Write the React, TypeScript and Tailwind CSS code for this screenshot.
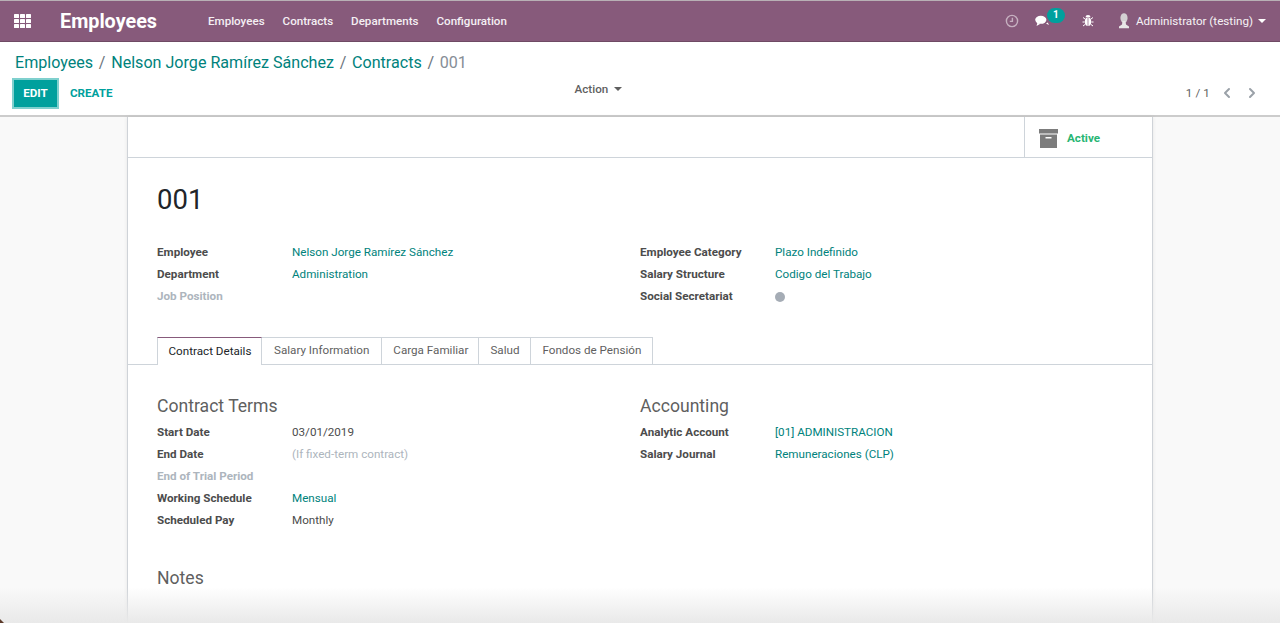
import React from "react";
import { ChevronLeft, ChevronRight } from "lucide-react";

const Grid = () => (
  <svg width="17" height="14" viewBox="0 0 17 14" fill="#fff">
    {[0, 5, 10].map((y) =>
      [0, 6, 12].map((x) => <rect key={`${x}-${y}`} x={x} y={y} width="5" height="4" rx="0.6" />)
    )}
  </svg>
);

const Caret = ({ c = "#fff" }: { c?: string }) => (
  <svg width="8" height="4" viewBox="0 0 8 4" fill={c}><path d="M0 0h8L4 4z" /></svg>
);

const Field = ({ label, value, link, muted, placeholder, dot }: { label: string; value?: string; link?: boolean; muted?: boolean; placeholder?: boolean; dot?: boolean }) => (
  <div className="flex h-[22px] items-center text-[11.65px]">
    <div className={`w-[135px] shrink-0 font-bold ${muted ? "text-[#adb5bd]" : "text-[#4c4c4c]"}`}>{label}</div>
    {dot ? (
      <span className="h-[10px] w-[10px] rounded-full bg-[#a5acb5]" />
    ) : (
      <div className={link ? "text-[#00827c]" : placeholder ? "text-[#adb5bd]" : "text-[#4c4c4c]"}>{value}</div>
    )}
  </div>
);

const tabs = [
  { t: "Salary Information", c: "pl-[12px] pr-[12px]" },
  { t: "Carga Familiar", c: "pl-[11px] pr-[10px]" },
  { t: "Salud", c: "pl-[11px] pr-[11px]" },
  { t: "Fondos de Pensión", c: "pl-[11px] pr-[11px]" },
];

export default function App() {
  return (
    <div className="relative flex h-[623px] flex-col overflow-hidden bg-white font-['Roboto',sans-serif] text-[#4c4c4c]">
      <header className="flex h-[42px] shrink-0 items-center border-t border-b border-t-[#b8b0b5] border-b-[#6f4a64] bg-[#875a7b] text-white">
        <div className="ml-[14px] flex w-[46px] items-center"><Grid /></div>
        <div className="w-[148px] pt-[2px] text-[19.8px] font-bold leading-none">Employees</div>
        <nav className="flex gap-[18px] pt-[2px] text-[11.6px] font-medium text-[#f4eff3]">
          <span>Employees</span><span>Contracts</span><span>Departments</span><span>Configuration</span>
        </nav>
        <div className="ml-auto flex items-center text-[11.65px]">
          <svg width="14" height="14" viewBox="0 0 14 14" fill="none" stroke="#c6b0c0" strokeWidth="1.4" className="mr-[16px]">
            <circle cx="7" cy="7" r="5.6" /><path d="M7.4 3.8v3.6H4.8" />
          </svg>
          <div className="relative mr-[33px] flex items-center">
            <svg width="14" height="12" viewBox="0 0 14 12" fill="#fff"><ellipse cx="5.8" cy="4.8" rx="5.6" ry="4" /><path d="M2.4 7.8L1.6 11l3.8-2.2z" /><path d="M11 8.5c1 .6 1.8 1.2 3 1.5-.6-.8-1-1.6-1-2.4z" /></svg>
            <span className="absolute left-[12px] top-[-7px] flex h-[15px] w-[18px] items-center justify-center rounded-full bg-[#00a09d] text-[10px] font-bold leading-none">1</span>
          </div>
          <svg width="12" height="13" viewBox="0 0 12 13" fill="#fff" stroke="#fff" className="mr-[24px]">
            <ellipse cx="6" cy="7.8" rx="3.2" ry="4.2" stroke="none" /><path d="M3.5 3.2a2.5 2.2 0 0 1 5 0z" stroke="none" />
            <path d="M3 5L1 3.5M9 5l2-1.5M2.6 8H.5M9.4 8h2.1M3 10.5l-2 1.5M9 10.5l2 1.5" strokeWidth="1" fill="none" />
            <path d="M6 4v8" stroke="#875a7b" strokeWidth="0.7" />
          </svg>
          <svg width="12" height="16" viewBox="0 0 12 16" className="mr-[6px]"><ellipse cx="6" cy="5" rx="3.6" ry="4.8" fill="#d4d0d3" /><path d="M4.5 8h3l.5 3.5 3 2v1.7H1v-1.7l3-2z" fill="#e8e6e7" /></svg>
          <span className="mr-[5px] pt-[2px] text-[#f6f2f5]">Administrator (testing)</span>
          <span className="mr-[14px] flex"><Caret /></span>
        </div>
      </header>

      <section className="h-[75px] shrink-0 border-b-2 border-[#ccc] px-[15px] pt-[6px]">
        <div className="flex h-[30px] items-center gap-[5.7px] text-[16.1px] leading-none">
          <span className="text-[#00827c]">Employees</span><span className="text-[#6c757d]">/</span>
          <span className="text-[#00827c]">Nelson Jorge Ramírez Sánchez</span><span className="text-[#6c757d]">/</span>
          <span className="text-[#00827c]">Contracts</span><span className="text-[#6c757d]">/</span>
          <span className="text-[#868e96]">001</span>
        </div>
        <div className="relative flex items-center">
          <button className="ml-[-3px] flex h-[31px] w-[47px] items-center justify-center border-2 border-[#7fd0ce] bg-[#00a09d] text-[11.65px] font-bold text-white">EDIT</button>
          <button className="ml-[11px] text-[11.65px] font-bold text-[#00a09d]">CREATE</button>
          <div className="ml-[462px] mb-[8px] flex items-center gap-[6px] text-[11.65px] font-medium text-[#5f5f5f]"><span>Action</span><Caret c="#5f5f5f" /></div>
          <div className="ml-auto flex items-center text-[11.65px] text-[#5f5f5f]">
            <span className="mr-[9px] tracking-[0.1px]">1 / 1</span>
            <ChevronLeft size={16} strokeWidth={3} className="mr-[9px] text-[#9aa1a8]" />
            <ChevronRight size={16} strokeWidth={3} className="mr-[5px] text-[#9aa1a8]" />
          </div>
        </div>
      </section>

      <main className="min-h-0 flex-1 bg-[#f9f9f9]">
        <div className="mx-auto h-[600px] w-[1026px] border border-t-0 border-[#cfd3d8] bg-white shadow-[0_0_4px_rgba(0,0,0,0.08)]">
          <div className="flex h-[41px] justify-end border-b border-[#ced4da]">
            <div className="flex w-[128px] items-center border-l border-[#ced4da] pl-[14px] pt-[2px]">
              <svg width="20" height="19" viewBox="0 0 20 19" fill="#7c7c7c" className="mr-[8px]">
                <rect x="0" y="0" width="19" height="4.5" />
                <path d="M1 5.5h17V19H1zM6.5 8v1.6h6V8z" fillRule="evenodd" />
              </svg>
              <span className="pt-[2px] text-[11.65px] font-bold text-[#28b673]">Active</span>
            </div>
          </div>

          <div className="px-[29px]">
            <h1 className="mt-[23px] text-[27.5px] leading-[38px] text-[#212529]">001</h1>
            <div className="mt-[23px] grid grid-cols-[483px_1fr]">
              <div>
                <Field label="Employee" value="Nelson Jorge Ramírez Sánchez" link />
                <Field label="Department" value="Administration" link />
                <Field label="Job Position" muted />
              </div>
              <div>
                <Field label="Employee Category" value="Plazo Indefinido" link />
                <Field label="Salary Structure" value="Codigo del Trabajo" link />
                <Field label="Social Secretariat" dot />
              </div>
            </div>
          </div>

          <div className="mt-[29px] flex h-[28px] items-end border-b border-[#ced4da] pl-[29px] text-[11.65px]">
            <div className="mb-[-1px] flex h-[28px] w-[105px] items-center justify-center border-x border-t border-x-[#ced4da] border-t-[#875a7b] bg-white pl-[1px] text-[#212529]">Contract Details</div>
            {tabs.map(({ t, c }) => (
              <div key={t} className={`mb-[-1px] flex h-[28px] items-center border-y border-r border-[#ced4da] ${c} text-[#5f5f5f]`}>{t}</div>
            ))}
          </div>

          <div className="px-[29px]">
            <div className="mt-[29px] grid grid-cols-[483px_1fr]">
              <div>
                <h2 className="mb-[4px] h-[24px] text-[17.6px] leading-[24px] text-[#5f5f5f]">Contract Terms</h2>
                <Field label="Start Date" value="03/01/2019" />
                <Field label="End Date" value="(If fixed-term contract)" placeholder />
                <Field label="End of Trial Period" muted />
                <Field label="Working Schedule" value="Mensual" link />
                <Field label="Scheduled Pay" value="Monthly" />
              </div>
              <div>
                <h2 className="mb-[4px] h-[24px] text-[17.6px] leading-[24px] text-[#5f5f5f]">Accounting</h2>
                <Field label="Analytic Account" value="[01] ADMINISTRACION" link />
                <Field label="Salary Journal" value="Remuneraciones (CLP)" link />
              </div>
            </div>
            <h2 className="mt-[34px] text-[17.6px] leading-[24px] text-[#5f5f5f]">Notes</h2>
          </div>
        </div>
      </main>

      <div className="pointer-events-none absolute inset-x-0 bottom-0 h-[36px] bg-gradient-to-b from-transparent to-[#e9e9e9]" />
      <svg width="4" height="4" viewBox="0 0 4 4" className="absolute bottom-0 left-0"><path d="M0 0l4 4H0z" fill="#5c3a2a" /></svg>
    </div>
  );
}
